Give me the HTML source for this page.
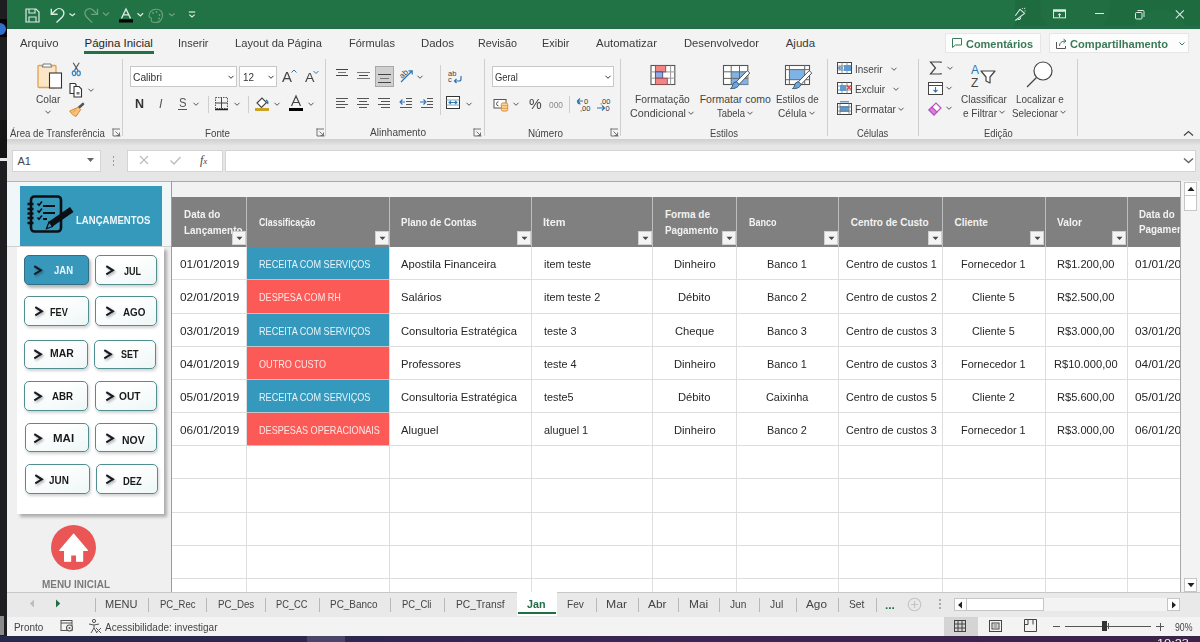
<!DOCTYPE html>
<html><head><meta charset="utf-8"><style>*{box-sizing:border-box;margin:0;padding:0}
html,body{width:1200px;height:642px;overflow:hidden;background:#f3f3f3;font-family:"Liberation Sans",sans-serif}
.a{position:absolute}
svg.a{overflow:visible}
.t{position:absolute;white-space:pre;line-height:1}
</style></head><body>
<div class="a" style="left:0px;top:0px;width:7px;height:642px;background:#1e1e20"></div>
<div class="a" style="left:0px;top:19px;width:7px;height:18px;background:#050505"></div>
<div class="a" style="left:-6px;top:23px;width:12px;height:12px;border-radius:50%;background:#2f6fd0"></div>
<div class="a" style="left:0px;top:120px;width:7px;height:38px;background:#141414"></div>
<div class="a" style="left:0px;top:158px;width:7px;height:3px;background:#e8e8e8"></div>
<div class="a" style="left:0px;top:616px;width:4px;height:19px;background:#8a8a8a"></div>
<div class="a" style="left:7px;top:0px;width:1193px;height:29px;background:#217346"></div>
<div class="a" style="left:1015px;top:0px;width:185px;height:29px;background:#1e6b40"></div>
<div class="a" style="left:1040px;top:-30px;width:70px;height:70px;border-radius:50%;background:#226f43;opacity:.6"></div>
<div class="a" style="left:1130px;top:10px;width:60px;height:60px;border-radius:50%;background:#207145;opacity:.6"></div>
<div class="a" style="left:7px;top:26px;width:1193px;height:3px;background:#246e47"></div>
<svg class="a" style="left:24px;top:7px" width="17" height="17" viewBox="0 0 17 17"><path d="M2 2h10l3 3v10H2z" fill="none" stroke="#dcebe2" stroke-width="1.2"/><path d="M5 2v4h6V2" fill="none" stroke="#dcebe2" stroke-width="1.1"/><path d="M5 15v-5h7v5" fill="none" stroke="#dcebe2" stroke-width="1.1"/></svg>
<svg class="a" style="left:45px;top:4px" width="60" height="24" viewBox="0 0 60 24"><path d="M6.3 4.8v5.5h6.3" fill="none" stroke="#dcebe2" stroke-width="1.4"/><path d="M6.6 10.1L10.8 6A4.7 4.7 0 0 1 17.5 12.7L11.5 18.6" fill="none" stroke="#dcebe2" stroke-width="1.4"/><path d="M24.5 9.5l2.8 2.2 2.8-2.2" fill="none" stroke="#dcebe2" stroke-width="1.3"/><path d="M52.5 4.8v5.5h-6.3" fill="none" stroke="#6fa283" stroke-width="1.3"/><path d="M52.2 10.1L48 6A4.7 4.7 0 0 0 41.3 12.7L47.3 18.6" fill="none" stroke="#6fa283" stroke-width="1.3"/></svg>
<svg class="a" style="left:102px;top:11px" width="8" height="6" viewBox="0 0 8 6"><path d="M1 1.5l3 3 3-3" fill="none" stroke="#6fa283" stroke-width="1.1"/></svg>
<svg class="a" style="left:110px;top:0px" width="90" height="30" viewBox="0 0 90 30"><path d="M11.5 18.4L16 8.9l4.5 9.5M13.2 14.8h5.6" fill="none" stroke="#dcebe2" stroke-width="1.3"/><rect x="9" y="19.3" width="14" height="3.2" fill="#000"/><path d="M27.5 13.3l2.8 2.6 2.8-2.6" fill="none" stroke="#dcebe2" stroke-width="1.3"/><path d="M46 9.2c-4.5 0-7.2 3.5-7 7 .1 1.5 1.5 1.2 2.2 1.8.8.7-.6 2.3.3 3.5.8 1 2.5 1 4.5 1 3.5 0 6.5-3 6.5-7s-2.5-6.3-6.5-6.3z" fill="none" stroke="#6fa283" stroke-width="1.1"/><circle cx="43" cy="13" r=".9" fill="#6fa283"/><circle cx="46.5" cy="12" r=".9" fill="#6fa283"/><circle cx="49.5" cy="15" r=".9" fill="#6fa283"/><circle cx="49" cy="18.5" r=".9" fill="#6fa283"/><path d="M59 13.5l2.8 2.2 2.8-2.2" fill="none" stroke="#6fa283" stroke-width="1.1"/><path d="M78.8 12h6.4" stroke="#dcebe2" stroke-width="1.2"/><path d="M79.3 14.6l2.7 2.3 2.7-2.3" fill="none" stroke="#dcebe2" stroke-width="1.2"/></svg>
<svg class="a" style="left:1008px;top:2px" width="26" height="24" viewBox="0 0 26 24"><path d="M7.3 13.8L12 7.3l4.6 4.1L7.3 18.5" fill="none" stroke="#dcebe2" stroke-width="1.1" stroke-linejoin="round"/><path d="M9.8 17.2a1.8 1.8 0 0 0 2.8-1.8" fill="none" stroke="#dcebe2" stroke-width="1.1"/><path d="M14.2 6l.5.9M17 5.8l-.6 1.2M17.6 8.8l-1 .3" stroke="#dcebe2" stroke-width="1"/></svg>
<svg class="a" style="left:1052px;top:8px" width="15" height="12" viewBox="0 0 15 12"><rect x="1.5" y="1.8" width="12" height="8" fill="none" stroke="#dcebe2" stroke-width="1"/><rect x="1.5" y="1.8" width="12" height="2" fill="#dcebe2"/><path d="M7.5 9V5.8M5.9 7.2l1.6-1.5 1.6 1.5" fill="none" stroke="#dcebe2" stroke-width="1"/></svg>
<div class="a" style="left:1095px;top:13px;width:9px;height:1px;background:#dcebe2"></div>
<svg class="a" style="left:1134px;top:9px" width="12" height="12" viewBox="0 0 12 12"><rect x="1.5" y="3.5" width="6.5" height="6.5" rx="1" fill="none" stroke="#dcebe2" stroke-width="1"/><path d="M3.5 1.5h5.5a1 1 0 0 1 1 1v5.5" fill="none" stroke="#dcebe2" stroke-width="1"/></svg>
<svg class="a" style="left:1174px;top:9px" width="11" height="11" viewBox="0 0 11 11"><path d="M1.8 1.3l8 8M9.8 1.3l-8 8" stroke="#dcebe2" stroke-width="1.1"/></svg>
<div class="a" style="left:7px;top:29px;width:1193px;height:28px;background:#f3f3f3"></div>
<div class="a" style="left:7px;top:29px;width:1193px;height:1px;background:#e4f3ea"></div>
<div class="t" style="left:19.50px;top:38.02px;font-size:11.5px;color:#3b3b3b;transform:scaleX(0.9876);transform-origin:0 0;">Arquivo</div>
<div class="t" style="left:84.50px;top:38.02px;font-size:11.5px;color:#262626;">Página Inicial</div>
<div class="t" style="left:177.50px;top:38.02px;font-size:11.5px;color:#3b3b3b;transform:scaleX(0.9540);transform-origin:0 0;">Inserir</div>
<div class="t" style="left:235.00px;top:38.02px;font-size:11.5px;color:#3b3b3b;transform:scaleX(0.9711);transform-origin:0 0;">Layout da Página</div>
<div class="t" style="left:349.00px;top:38.02px;font-size:11.5px;color:#3b3b3b;transform:scaleX(0.9592);transform-origin:0 0;">Fórmulas</div>
<div class="t" style="left:421.00px;top:38.02px;font-size:11.5px;color:#3b3b3b;transform:scaleX(0.9929);transform-origin:0 0;">Dados</div>
<div class="t" style="left:477.70px;top:38.02px;font-size:11.5px;color:#3b3b3b;transform:scaleX(0.9381);transform-origin:0 0;">Revisão</div>
<div class="t" style="left:541.70px;top:38.02px;font-size:11.5px;color:#3b3b3b;transform:scaleX(0.9496);transform-origin:0 0;">Exibir</div>
<div class="t" style="left:595.70px;top:38.02px;font-size:11.5px;color:#3b3b3b;transform:scaleX(0.9943);transform-origin:0 0;">Automatizar</div>
<div class="t" style="left:684.00px;top:38.02px;font-size:11.5px;color:#3b3b3b;transform:scaleX(0.9778);transform-origin:0 0;">Desenvolvedor</div>
<div class="t" style="left:785.70px;top:38.02px;font-size:11.5px;color:#3b3b3b;">Ajuda</div>
<div class="a" style="left:84px;top:51px;width:70px;height:3px;background:#217346"></div>
<div class="a" style="left:945px;top:33px;width:96px;height:20px;background:#fdfdfd;border:1px solid #e6e6e6"></div>
<svg class="a" style="left:951px;top:37px" width="12" height="12" viewBox="0 0 12 12"><path d="M1.5 1.5h9v6.5h-6l-3 2.5z" fill="none" stroke="#3b7a57" stroke-width="1"/></svg>
<div class="t" style="left:966.00px;top:38.52px;font-size:11.5px;color:#3b7a57;font-weight:bold;transform:scaleX(0.9535);transform-origin:0 0;">Comentários</div>
<div class="a" style="left:1049px;top:33px;width:140px;height:20px;background:#fdfdfd;border:1px solid #e6e6e6"></div>
<svg class="a" style="left:1055px;top:37px" width="13" height="13" viewBox="0 0 13 13"><path d="M1.5 5v6.5h9V9" fill="none" stroke="#555" stroke-width="1"/><path d="M4.5 9c0-3 2-5 6-5M8.5 2l2.5 2-2.5 2" fill="none" stroke="#3b7a57" stroke-width="1"/></svg>
<div class="t" style="left:1070.00px;top:38.52px;font-size:11.5px;color:#3b7a57;font-weight:bold;transform:scaleX(0.9645);transform-origin:0 0;">Compartilhamento</div>
<svg class="a" style="left:1178px;top:41px" width="8" height="6" viewBox="0 0 8 6"><path d="M1.5 1.5l2.5 2.5 2.5-2.5" fill="none" stroke="#3b7a57" stroke-width="1"/></svg>
<div class="a" style="left:7px;top:57px;width:1193px;height:82px;background:#f3f3f3"></div>
<div class="a" style="left:7px;top:139px;width:1193px;height:6px;background:linear-gradient(#cfcfcf,#e3e3e3)"></div>
<div class="a" style="left:7px;top:145px;width:1193px;height:36px;background:#e6e6e6"></div>
<svg class="a" style="left:36px;top:62px" width="28" height="28" viewBox="0 0 28 28"><rect x="2" y="3.5" width="18" height="22" rx="1" fill="#fbe7c8" stroke="#e0a050" stroke-width="1.3"/><path d="M7 3.5V2h8v1.5l1 1.5H6z" fill="#fff" stroke="#777" stroke-width="1"/><rect x="13.5" y="11" width="12" height="15" fill="#fff" stroke="#333" stroke-width="1.1"/></svg>
<div class="t" style="left:36.00px;top:93.77px;font-size:11px;color:#444;transform:scaleX(0.9243);transform-origin:0 0;">Colar</div>
<svg class="a" style="left:44px;top:109px" width="8" height="6" viewBox="0 0 8 6"><path d="M1.5 1.8l2.5 2.5 2.5-2.5" fill="none" stroke="#555" stroke-width="1"/></svg>
<svg class="a" style="left:70px;top:62px" width="13" height="15" viewBox="0 0 13 15"><path d="M3.2 .8l4.8 7.8M9.2 .8L4.4 8.6" stroke="#555" stroke-width="1.1" fill="none"/><ellipse cx="4" cy="11.3" rx="1.7" ry="2.3" fill="none" stroke="#3a8ac8" stroke-width="1.3"/><ellipse cx="8.6" cy="11.3" rx="1.7" ry="2.3" fill="none" stroke="#3a8ac8" stroke-width="1.3"/></svg>
<svg class="a" style="left:68px;top:82px" width="16" height="16" viewBox="0 0 16 16"><path d="M2 1.5h5l1 1v9H2z" fill="#fff" stroke="#333" stroke-width="1.1"/><path d="M6 4.5h5l2.5 2.5v8H6z" fill="#fff" stroke="#333" stroke-width="1.1"/><rect x="8.5" y="10" width="3" height="2.5" fill="#777"/></svg>
<svg class="a" style="left:87px;top:87px" width="8" height="6" viewBox="0 0 8 6"><path d="M1.5 1.8l2.5 2.5 2.5-2.5" fill="none" stroke="#555" stroke-width="1"/></svg>
<svg class="a" style="left:68px;top:102px" width="17" height="16" viewBox="0 0 17 16"><path d="M15 2l-4.5 4" stroke="#555" stroke-width="2.6" stroke-linecap="round"/><path d="M10.3 5.2l2.4 2.4-4.6 6.8c-2.3-.6-4.8-2.6-6.4-5.4z" fill="#f7c27e" stroke="#d9892b" stroke-width="1"/><path d="M5 10.5l3-3" stroke="#d9892b" stroke-width=".8"/></svg>
<div class="t" style="left:10.00px;top:128.58px;font-size:10px;color:#444;transform:scaleX(0.9650);transform-origin:0 0;">Área de Transferência</div>
<svg class="a" style="left:112px;top:128px" width="9" height="9" viewBox="0 0 9 9"><path d="M1 .5v7.5h7.5M.5 1h7.5" fill="none" stroke="#666" stroke-width=".9"/><path d="M3.5 3.5l4 4M4.5 7.5h3v-3" fill="none" stroke="#666" stroke-width=".9"/></svg>
<div class="a" style="left:122px;top:59px;width:1px;height:77px;background:#cfcfcf"></div>
<div class="a" style="left:130px;top:66px;width:107px;height:21px;background:#fff;border:1px solid #c8c8c8"></div>
<div class="t" style="left:133.00px;top:71.77px;font-size:11px;color:#333;transform:scaleX(0.9299);transform-origin:0 0;">Calibri</div>
<svg class="a" style="left:227px;top:74px" width="8" height="6" viewBox="0 0 8 6"><path d="M1.5 1.8l2.5 2.5 2.5-2.5" fill="none" stroke="#333" stroke-width="1"/></svg>
<div class="a" style="left:239px;top:66px;width:38px;height:21px;background:#fff;border:1px solid #c8c8c8"></div>
<div class="t" style="left:243.00px;top:71.77px;font-size:11px;color:#333;transform:scaleX(0.9009);transform-origin:0 0;">12</div>
<svg class="a" style="left:267px;top:74px" width="8" height="6" viewBox="0 0 8 6"><path d="M1.5 1.8l2.5 2.5 2.5-2.5" fill="none" stroke="#333" stroke-width="1"/></svg>
<div class="t" style="left:282.00px;top:70.27px;font-size:14px;color:#444;transform:scaleX(1.0661);transform-origin:0 0;">A</div>
<svg class="a" style="left:291px;top:69px" width="6" height="5" viewBox="0 0 6 5"><path d="M.5 3.5l2.5-2.5 2.5 2.5" fill="none" stroke="#2e75b6" stroke-width="1"/></svg>
<div class="t" style="left:304.50px;top:72.27px;font-size:12px;color:#444;transform:scaleX(1.1816);transform-origin:0 0;">A</div>
<svg class="a" style="left:313px;top:70px" width="6" height="5" viewBox="0 0 6 5"><path d="M.5 1l2.5 2.5 2.5-2.5" fill="none" stroke="#2e75b6" stroke-width="1"/></svg>
<div class="t" style="left:134.50px;top:97.77px;font-size:12px;color:#333;font-weight:bold;transform:scaleX(1.0417);transform-origin:0 0;">N</div>
<div class="t" style="left:159.00px;top:97.77px;font-size:12px;color:#555;transform:scaleX(1.0417);transform-origin:0 0;font-style:italic;">I</div>
<div class="t" style="left:178.50px;top:97.27px;font-size:12px;color:#555;transform:scaleX(0.9398);transform-origin:0 0;">S</div>
<div class="a" style="left:178px;top:109px;width:9px;height:1px;background:#555"></div>
<svg class="a" style="left:192px;top:101px" width="8" height="6" viewBox="0 0 8 6"><path d="M1.5 1.8l2.5 2.5 2.5-2.5" fill="none" stroke="#555" stroke-width="1"/></svg>
<div class="a" style="left:208px;top:96px;width:1px;height:17px;background:#cfcfcf"></div>
<svg class="a" style="left:214px;top:96px" width="16" height="16" viewBox="0 0 16 16"><rect x="1.5" y="1.5" width="12" height="11" fill="none" stroke="#555" stroke-width="1" stroke-dasharray="1.5 1"/><path d="M7.5 1.5v11M1.5 7h12" stroke="#444" stroke-width="1"/><path d="M1 13.5h13" stroke="#222" stroke-width="1.5"/></svg>
<svg class="a" style="left:233px;top:101px" width="8" height="6" viewBox="0 0 8 6"><path d="M1.5 1.8l2.5 2.5 2.5-2.5" fill="none" stroke="#555" stroke-width="1"/></svg>
<div class="a" style="left:248px;top:96px;width:1px;height:17px;background:#cfcfcf"></div>
<svg class="a" style="left:254px;top:95px" width="17" height="17" viewBox="0 0 17 17"><path d="M3 8l5-5 4.5 4.5-5 5z" fill="#fff" stroke="#444" stroke-width="1.1"/><path d="M12 5c1.5 1 2 3 1.5 4" fill="none" stroke="#2e75b6" stroke-width="1.3"/><rect x="1" y="13" width="14" height="3" fill="#c9a227"/></svg>
<svg class="a" style="left:273px;top:101px" width="8" height="6" viewBox="0 0 8 6"><path d="M1.5 1.8l2.5 2.5 2.5-2.5" fill="none" stroke="#555" stroke-width="1"/></svg>
<svg class="a" style="left:288px;top:95px" width="16" height="17" viewBox="0 0 16 17"><path d="M3.5 11l4.5-10 4.5 10M5.5 7.5h5" fill="none" stroke="#444" stroke-width="1.2"/><rect x="1" y="13" width="14" height="3" fill="#000"/></svg>
<svg class="a" style="left:307px;top:101px" width="8" height="6" viewBox="0 0 8 6"><path d="M1.5 1.8l2.5 2.5 2.5-2.5" fill="none" stroke="#555" stroke-width="1"/></svg>
<div class="t" style="left:205.00px;top:128.78px;font-size:10px;color:#444;transform:scaleX(0.9785);transform-origin:0 0;">Fonte</div>
<svg class="a" style="left:316px;top:128px" width="9" height="9" viewBox="0 0 9 9"><path d="M1 .5v7.5h7.5M.5 1h7.5" fill="none" stroke="#666" stroke-width=".9"/><path d="M3.5 3.5l4 4M4.5 7.5h3v-3" fill="none" stroke="#666" stroke-width=".9"/></svg>
<div class="a" style="left:325px;top:59px;width:1px;height:77px;background:#cfcfcf"></div>
<div class="a" style="left:336px;top:69px;width:12px;height:1px;background:#444"></div>
<div class="a" style="left:338px;top:72px;width:8px;height:1px;background:#777"></div>
<div class="a" style="left:336px;top:75px;width:12px;height:1px;background:#444"></div>
<div class="a" style="left:357px;top:72px;width:13px;height:1px;background:#777"></div>
<div class="a" style="left:359px;top:75px;width:9px;height:1px;background:#444"></div>
<div class="a" style="left:357px;top:78px;width:13px;height:1px;background:#777"></div>
<div class="a" style="left:375px;top:66px;width:19px;height:21px;background:#d0d0d0;border:1px solid #a8a8a8"></div>
<div class="a" style="left:378px;top:74px;width:13px;height:1px;background:#444"></div>
<div class="a" style="left:380px;top:78px;width:9px;height:1px;background:#777"></div>
<div class="a" style="left:378px;top:82px;width:13px;height:1px;background:#444"></div>
<svg class="a" style="left:398px;top:67px" width="17" height="17" viewBox="0 0 17 17"><text x="1" y="10" font-size="8" fill="#444" font-family="Liberation Sans" transform="rotate(-45 5 7)">ab</text><path d="M3 15L14 4M10.5 3.8H14.2V7.5" fill="none" stroke="#2e75b6" stroke-width="1.2"/></svg>
<svg class="a" style="left:416px;top:74px" width="8" height="6" viewBox="0 0 8 6"><path d="M1.5 1.8l2.5 2.5 2.5-2.5" fill="none" stroke="#555" stroke-width="1"/></svg>
<div class="a" style="left:336px;top:98px;width:12px;height:1px;background:#555"></div>
<div class="a" style="left:336px;top:101px;width:9px;height:1px;background:#555"></div>
<div class="a" style="left:336px;top:104px;width:12px;height:1px;background:#555"></div>
<div class="a" style="left:336px;top:107px;width:9px;height:1px;background:#555"></div>
<div class="a" style="left:357px;top:98px;width:12px;height:1px;background:#555"></div>
<div class="a" style="left:359px;top:101px;width:8px;height:1px;background:#555"></div>
<div class="a" style="left:357px;top:104px;width:12px;height:1px;background:#555"></div>
<div class="a" style="left:359px;top:107px;width:8px;height:1px;background:#555"></div>
<div class="a" style="left:378px;top:98px;width:12px;height:1px;background:#555"></div>
<div class="a" style="left:381px;top:101px;width:9px;height:1px;background:#555"></div>
<div class="a" style="left:378px;top:104px;width:12px;height:1px;background:#555"></div>
<div class="a" style="left:381px;top:107px;width:9px;height:1px;background:#555"></div>
<div class="a" style="left:406px;top:98px;width:6px;height:1px;background:#555"></div>
<div class="a" style="left:406px;top:101px;width:6px;height:1px;background:#555"></div>
<div class="a" style="left:406px;top:104px;width:6px;height:1px;background:#555"></div>
<div class="a" style="left:400px;top:107px;width:12px;height:1px;background:#555"></div>
<svg class="a" style="left:399px;top:99px" width="7" height="6" viewBox="0 0 7 6"><path d="M6 3H1M3.5 .5L1 3l2.5 2.5" fill="none" stroke="#2e75b6" stroke-width="1.1"/></svg>
<div class="a" style="left:427px;top:98px;width:6px;height:1px;background:#555"></div>
<div class="a" style="left:427px;top:101px;width:6px;height:1px;background:#555"></div>
<div class="a" style="left:427px;top:104px;width:6px;height:1px;background:#555"></div>
<div class="a" style="left:421px;top:107px;width:12px;height:1px;background:#555"></div>
<svg class="a" style="left:420px;top:99px" width="7" height="6" viewBox="0 0 7 6"><path d="M0 3h5M3.5 .5L6 3 3.5 5.5" fill="none" stroke="#2e75b6" stroke-width="1.1"/></svg>
<div class="a" style="left:440px;top:65px;width:1px;height:50px;background:#cfcfcf"></div>
<svg class="a" style="left:448px;top:69px" width="15" height="15" viewBox="0 0 15 15"><text x="0" y="6.5" font-size="7.5" fill="#444" font-family="Liberation Sans">ab</text><text x="0" y="13" font-size="7.5" fill="#444" font-family="Liberation Sans">c</text><path d="M13 7v3a2 2 0 0 1-2 2H6.5M8.5 10l-2 2 2 2" fill="none" stroke="#2e75b6" stroke-width="1.2"/></svg>
<svg class="a" style="left:446px;top:96px" width="15" height="14" viewBox="0 0 15 14"><rect x=".5" y=".5" width="13" height="12" fill="#fff" stroke="#333" stroke-width="1"/><path d="M.5 4h13M.5 9h13" stroke="#7ab" stroke-width="1"/><path d="M3 6.5h8M5 4.8L3 6.5 5 8.2M9 4.8l2 1.7-2 1.7" fill="none" stroke="#2e75b6" stroke-width="1.1"/></svg>
<svg class="a" style="left:465px;top:101px" width="8" height="6" viewBox="0 0 8 6"><path d="M1.5 1.8l2.5 2.5 2.5-2.5" fill="none" stroke="#555" stroke-width="1"/></svg>
<div class="t" style="left:370.00px;top:128.38px;font-size:10px;color:#444;transform:scaleX(1.0072);transform-origin:0 0;">Alinhamento</div>
<svg class="a" style="left:473px;top:128px" width="9" height="9" viewBox="0 0 9 9"><path d="M1 .5v7.5h7.5M.5 1h7.5" fill="none" stroke="#666" stroke-width=".9"/><path d="M3.5 3.5l4 4M4.5 7.5h3v-3" fill="none" stroke="#666" stroke-width=".9"/></svg>
<div class="a" style="left:484px;top:59px;width:1px;height:77px;background:#cfcfcf"></div>
<div class="a" style="left:492px;top:66px;width:122px;height:21px;background:#fff;border:1px solid #c8c8c8"></div>
<div class="t" style="left:494.70px;top:71.77px;font-size:11px;color:#333;transform:scaleX(0.8515);transform-origin:0 0;">Geral</div>
<svg class="a" style="left:604px;top:74px" width="8" height="6" viewBox="0 0 8 6"><path d="M1.5 1.8l2.5 2.5 2.5-2.5" fill="none" stroke="#333" stroke-width="1"/></svg>
<svg class="a" style="left:493px;top:98px" width="17" height="14" viewBox="0 0 17 14"><rect x="1" y="1.5" width="12" height="8.5" fill="#fff" stroke="#555" stroke-width="1"/><path d="M5.5 3.8a2 2 0 1 0 0 4" fill="none" stroke="#555" stroke-width="1"/><rect x="8.3" y="5" width="6.4" height="8" rx="1.5" fill="#fbd7a0" stroke="#e08a2a" stroke-width="1"/><path d="M8.3 7.7h6.4M8.3 10.3h6.4" stroke="#e08a2a" stroke-width=".8"/></svg>
<svg class="a" style="left:512px;top:101px" width="8" height="6" viewBox="0 0 8 6"><path d="M1.5 1.8l2.5 2.5 2.5-2.5" fill="none" stroke="#555" stroke-width="1"/></svg>
<div class="t" style="left:529.00px;top:97.21px;font-size:14.5px;color:#444;transform:scaleX(0.9841);transform-origin:0 0;">%</div>
<div class="t" style="left:549.00px;top:99.83px;font-size:9.5px;color:#888;transform:scaleX(0.8824);transform-origin:0 0;">000</div>
<div class="a" style="left:569px;top:96px;width:1px;height:17px;background:#cfcfcf"></div>
<svg class="a" style="left:575px;top:97px" width="17" height="15" viewBox="0 0 17 15"><path d="M8 4H3M5 1.5L2.5 4 5 6.5" fill="none" stroke="#2e75b6" stroke-width="1.2"/><path d="M2.5 4c0 2 1.5 3 3 3" fill="none" stroke="#2e75b6" stroke-width="1.1"/><text x="9" y="7" font-size="7.5" fill="#333" font-family="Liberation Sans">0</text><text x="5" y="14" font-size="7.5" fill="#333" font-family="Liberation Sans">,00</text></svg>
<svg class="a" style="left:596px;top:97px" width="17" height="15" viewBox="0 0 17 15"><text x="4" y="7" font-size="7.5" fill="#333" font-family="Liberation Sans">,00</text><path d="M1 11h7M6 8.5l2.5 2.5L6 13.5" fill="none" stroke="#2e75b6" stroke-width="1.2"/><text x="9.5" y="14" font-size="7.5" fill="#333" font-family="Liberation Sans">0</text></svg>
<div class="t" style="left:528.00px;top:128.58px;font-size:10px;color:#444;transform:scaleX(0.9845);transform-origin:0 0;">Número</div>
<svg class="a" style="left:610px;top:128px" width="9" height="9" viewBox="0 0 9 9"><path d="M1 .5v7.5h7.5M.5 1h7.5" fill="none" stroke="#666" stroke-width=".9"/><path d="M3.5 3.5l4 4M4.5 7.5h3v-3" fill="none" stroke="#666" stroke-width=".9"/></svg>
<div class="a" style="left:620px;top:59px;width:1px;height:77px;background:#cfcfcf"></div>
<svg class="a" style="left:650px;top:65px" width="25" height="20" viewBox="0 0 25 20"><rect x="1" y=".5" width="23.8" height="19" fill="#fff" stroke="#555" stroke-width="1.1"/><path d="M1 6.9h23.8M1 13.2h23.8M20.6 .5v19" stroke="#999" stroke-width="1"/><rect x="5.4" y=".5" width="10.3" height="6.4" fill="#f08585" stroke="#9a4545" stroke-width=".9"/><rect x="5.4" y="6.9" width="7.3" height="6.3" fill="#93a9e3" stroke="#3a4f80" stroke-width=".9"/><rect x="5.4" y="13.2" width="11.9" height="6.3" fill="#f08585" stroke="#9a4545" stroke-width=".9"/></svg>
<svg class="a" style="left:720px;top:62px" width="34" height="30" viewBox="0 0 34 30"><rect x="3.5" y="3.5" width="24.3" height="19" fill="#fff" stroke="#555" stroke-width="1.1"/><rect x="11.2" y="9.8" width="16.6" height="12.7" fill="#7fb2e5"/><path d="M11.2 3.5v19M19.5 3.5v19M3.5 9.8h24.3M3.5 16.4h24.3" stroke="#666" stroke-width="1"/><path d="M27.2 8.6l2.6 2.4-10.8 11.6-2.8-2.6z" fill="#fff" stroke="#555" stroke-width="1"/><path d="M16.3 19.6l2.8 2.8c-.8 2.6-3.5 4.4-8.6 4.2 2.2-1.6 2-3.6 3-5.6z" fill="#6aa8e0" stroke="#3a4a5a" stroke-width=".9"/></svg>
<svg class="a" style="left:782px;top:62px" width="34" height="30" viewBox="0 0 34 30"><rect x="3.5" y="3.5" width="24" height="19" fill="#fff" stroke="#555" stroke-width="1.1"/><rect x="7.4" y="7.6" width="15.3" height="10.1" fill="#7fb2e5"/><path d="M7.4 3.5v19M22.7 3.5v19M3.5 7.6h24M3.5 17.7h24" stroke="#666" stroke-width="1"/><path d="M27.2 8.6l2.6 2.4-10.8 11.6-2.8-2.6z" fill="#fff" stroke="#555" stroke-width="1"/><path d="M16.3 19.6l2.8 2.8c-.8 2.6-3.5 4.4-8.6 4.2 2.2-1.6 2-3.6 3-5.6z" fill="#6aa8e0" stroke="#3a4a5a" stroke-width=".9"/></svg>
<div class="t" style="left:635.00px;top:94.12px;font-size:10.5px;color:#444;transform:scaleX(0.9783);transform-origin:0 0;">Formatação</div>
<div class="t" style="left:630.00px;top:108.32px;font-size:10.5px;color:#444;transform:scaleX(1.0207);transform-origin:0 0;">Condicional</div>
<svg class="a" style="left:687px;top:110px" width="8" height="6" viewBox="0 0 8 6"><path d="M1.5 1.8l2.5 2.5 2.5-2.5" fill="none" stroke="#555" stroke-width="1"/></svg>
<div class="t" style="left:699.70px;top:94.12px;font-size:10.5px;color:#444;">Formatar como</div>
<div class="t" style="left:717.00px;top:108.32px;font-size:10.5px;color:#444;transform:scaleX(0.9040);transform-origin:0 0;">Tabela</div>
<svg class="a" style="left:746px;top:110px" width="8" height="6" viewBox="0 0 8 6"><path d="M1.5 1.8l2.5 2.5 2.5-2.5" fill="none" stroke="#555" stroke-width="1"/></svg>
<div class="t" style="left:775.80px;top:94.12px;font-size:10.5px;color:#444;transform:scaleX(0.9403);transform-origin:0 0;">Estilos de</div>
<div class="t" style="left:778.30px;top:108.32px;font-size:10.5px;color:#444;transform:scaleX(0.9624);transform-origin:0 0;">Célula</div>
<svg class="a" style="left:808px;top:110px" width="8" height="6" viewBox="0 0 8 6"><path d="M1.5 1.8l2.5 2.5 2.5-2.5" fill="none" stroke="#555" stroke-width="1"/></svg>
<div class="t" style="left:710.40px;top:128.78px;font-size:10px;color:#444;transform:scaleX(0.9474);transform-origin:0 0;">Estilos</div>
<div class="a" style="left:827px;top:59px;width:1px;height:77px;background:#cfcfcf"></div>
<svg class="a" style="left:837px;top:62px" width="15" height="12" viewBox="0 0 15 12"><rect x=".5" y=".5" width="14" height="11" fill="#fff" stroke="#444" stroke-width="1"/><path d="M.5 4h14M.5 8h14M5 .5v11M10 .5v11" stroke="#777" stroke-width=".8"/><rect x="7" y="3" width="7" height="6" fill="#5b9bd5"/><path d="M6 6H1.5M3.5 4L1.5 6l2 2" fill="none" stroke="#2e75b6" stroke-width="1"/></svg>
<div class="t" style="left:854.60px;top:64.17px;font-size:11px;color:#444;transform:scaleX(0.9026);transform-origin:0 0;">Inserir</div>
<svg class="a" style="left:890px;top:66px" width="8" height="6" viewBox="0 0 8 6"><path d="M1.5 1.8l2.5 2.5 2.5-2.5" fill="none" stroke="#555" stroke-width="1"/></svg>
<svg class="a" style="left:837px;top:82px" width="15" height="12" viewBox="0 0 15 12"><rect x=".5" y=".5" width="14" height="11" fill="#fff" stroke="#444" stroke-width="1"/><path d="M.5 4h14M.5 8h14M5 .5v11M10 .5v11" stroke="#777" stroke-width=".8"/><rect x="3" y="3" width="6" height="6" fill="#5b9bd5"/><path d="M10 3.5l4 4M14 3.5l-4 4" stroke="#e04040" stroke-width="1.1"/></svg>
<div class="t" style="left:854.60px;top:83.77px;font-size:11px;color:#444;transform:scaleX(0.9152);transform-origin:0 0;">Excluir</div>
<svg class="a" style="left:892px;top:86px" width="8" height="6" viewBox="0 0 8 6"><path d="M1.5 1.8l2.5 2.5 2.5-2.5" fill="none" stroke="#555" stroke-width="1"/></svg>
<svg class="a" style="left:837px;top:101px" width="15" height="14" viewBox="0 0 15 14"><rect x=".5" y="2.5" width="14" height="11" fill="#fff" stroke="#444" stroke-width="1"/><rect x="3" y="5" width="9" height="6" fill="#5b9bd5"/><path d="M.5 6h14M.5 10h14M3 2.5v11M12 2.5v11" stroke="#777" stroke-width=".8"/><path d="M3 .8h9" stroke="#2e75b6" stroke-width="1"/></svg>
<div class="t" style="left:854.60px;top:104.27px;font-size:11px;color:#444;transform:scaleX(0.9169);transform-origin:0 0;">Formatar</div>
<svg class="a" style="left:897px;top:106px" width="8" height="6" viewBox="0 0 8 6"><path d="M1.5 1.8l2.5 2.5 2.5-2.5" fill="none" stroke="#555" stroke-width="1"/></svg>
<div class="t" style="left:857.40px;top:128.78px;font-size:10px;color:#444;transform:scaleX(0.9385);transform-origin:0 0;">Células</div>
<div class="a" style="left:918px;top:59px;width:1px;height:77px;background:#cfcfcf"></div>
<svg class="a" style="left:929px;top:61px" width="13" height="14" viewBox="0 0 13 14"><path d="M12 2V1H1.5l5 6-5 6H12v-1" fill="none" stroke="#444" stroke-width="1.2"/></svg>
<svg class="a" style="left:946px;top:65px" width="8" height="6" viewBox="0 0 8 6"><path d="M1.5 1.8l2.5 2.5 2.5-2.5" fill="none" stroke="#555" stroke-width="1"/></svg>
<svg class="a" style="left:928px;top:82px" width="15" height="13" viewBox="0 0 15 13"><rect x=".5" y=".5" width="14" height="12" fill="#fff" stroke="#444" stroke-width="1"/><path d="M.5 3.5h14" stroke="#444" stroke-width="1"/><path d="M7.5 5v5M5.5 8l2 2 2-2" fill="none" stroke="#2e75b6" stroke-width="1.1"/></svg>
<svg class="a" style="left:945px;top:85px" width="8" height="6" viewBox="0 0 8 6"><path d="M1.5 1.8l2.5 2.5 2.5-2.5" fill="none" stroke="#555" stroke-width="1"/></svg>
<svg class="a" style="left:927px;top:100px" width="16" height="16" viewBox="0 0 16 16"><path d="M2 10l7-7 5 5-7 7z" fill="#fff" stroke="#b94fc0" stroke-width="1.2"/><path d="M2 10l3-3 5 5-3 3z" fill="#d880dc" stroke="#b94fc0" stroke-width="1.1"/></svg>
<svg class="a" style="left:945px;top:105px" width="8" height="6" viewBox="0 0 8 6"><path d="M1.5 1.8l2.5 2.5 2.5-2.5" fill="none" stroke="#555" stroke-width="1"/></svg>
<svg class="a" style="left:970px;top:63px" width="28" height="25" viewBox="0 0 28 25"><text x="1" y="11" font-size="12" fill="#2e75b6" font-family="Liberation Sans">A</text><text x="1" y="24" font-size="12" fill="#444" font-family="Liberation Sans">Z</text><path d="M11 8h14l-5 6v6l-4-2v-4z" fill="#fff" stroke="#444" stroke-width="1.2" stroke-linejoin="round"/></svg>
<div class="t" style="left:960.80px;top:94.27px;font-size:10.5px;color:#444;transform:scaleX(0.9482);transform-origin:0 0;">Classificar</div>
<div class="t" style="left:963.00px;top:107.82px;font-size:10.5px;color:#444;transform:scaleX(0.9552);transform-origin:0 0;">e Filtrar</div>
<svg class="a" style="left:998px;top:109px" width="8" height="6" viewBox="0 0 8 6"><path d="M1.5 1.8l2.5 2.5 2.5-2.5" fill="none" stroke="#555" stroke-width="1"/></svg>
<svg class="a" style="left:1025px;top:61px" width="30" height="28" viewBox="0 0 30 28"><circle cx="18" cy="10" r="9" fill="#fff" stroke="#444" stroke-width="1.2"/><path d="M11.5 16.5L2 26" stroke="#444" stroke-width="1.3"/></svg>
<div class="t" style="left:1016.25px;top:94.27px;font-size:10.5px;color:#444;transform:scaleX(0.9406);transform-origin:0 0;">Localizar e</div>
<div class="t" style="left:1011.90px;top:107.82px;font-size:10.5px;color:#444;transform:scaleX(0.9292);transform-origin:0 0;">Selecionar</div>
<svg class="a" style="left:1059px;top:109px" width="8" height="6" viewBox="0 0 8 6"><path d="M1.5 1.8l2.5 2.5 2.5-2.5" fill="none" stroke="#555" stroke-width="1"/></svg>
<div class="t" style="left:983.75px;top:128.78px;font-size:10px;color:#444;transform:scaleX(0.9395);transform-origin:0 0;">Edição</div>
<div class="a" style="left:1077px;top:59px;width:1px;height:77px;background:#cfcfcf"></div>
<svg class="a" style="left:1183px;top:130px" width="11" height="7" viewBox="0 0 11 7"><path d="M1 5.5l4.5-4 4.5 4" fill="none" stroke="#444" stroke-width="1.2"/></svg>
<div class="a" style="left:12px;top:150px;width:89px;height:22px;background:#fff;border:1px solid #d4d4d4"></div>
<div class="t" style="left:17.50px;top:156.27px;font-size:11px;color:#444;">A1</div>
<svg class="a" style="left:86px;top:157px" width="9" height="6" viewBox="0 0 9 6"><path d="M1 1h7L4.5 5z" fill="#666"/></svg>
<div class="a" style="left:113px;top:156px;width:1px;height:2px;background:#999"></div>
<div class="a" style="left:113px;top:160px;width:1px;height:2px;background:#999"></div>
<div class="a" style="left:113px;top:164px;width:1px;height:2px;background:#999"></div>
<div class="a" style="left:127px;top:150px;width:96px;height:22px;background:#fff;border:1px solid #d4d4d4"></div>
<svg class="a" style="left:138px;top:154px" width="12" height="12" viewBox="0 0 12 12"><path d="M2 2l8 8M10 2l-8 8" stroke="#bbb" stroke-width="1.1"/></svg>
<svg class="a" style="left:169px;top:154px" width="13" height="12" viewBox="0 0 13 12"><path d="M1.5 6.5l3.5 3.5 6.5-7" fill="none" stroke="#bbb" stroke-width="1.3"/></svg>
<div class="t" style="left:200px;top:154px;font-size:12px;font-family:'Liberation Serif';font-style:italic;color:#444">f<span style="font-size:9px">x</span></div>
<div class="a" style="left:225px;top:150px;width:971px;height:22px;background:#fff;border:1px solid #d4d4d4"></div>
<svg class="a" style="left:1183px;top:157px" width="11" height="7" viewBox="0 0 11 7"><path d="M1 1.5l4.5 4 4.5-4" fill="none" stroke="#666" stroke-width="1.5"/></svg>
<div class="a" style="left:7px;top:181px;width:164px;height:411px;background:#f0f0f0"></div>
<div class="a" style="left:7px;top:181px;width:164px;height:1px;background:#b4b4b4"></div>
<div class="a" style="left:7px;top:182px;width:164px;height:64px;background:#f1f6f8"></div>
<div class="a" style="left:7px;top:246px;width:164px;height:1px;background:#d0d0d0"></div>
<div class="a" style="left:0;top:0;width:1180px;height:592px;overflow:hidden">
<div class="a" style="left:171px;top:181px;width:1009px;height:411px;background:#fff"></div>
<div class="a" style="left:171px;top:181px;width:1009px;height:1px;background:#a8a8a8"></div>
<div class="a" style="left:172px;top:182px;width:1008px;height:15px;background:#f2f2f2"></div>
<div class="a" style="left:172px;top:197px;width:1008px;height:50px;background:#808080"></div>
<div class="a" style="left:172px;top:279px;width:1008px;height:1px;background:#dedede"></div>
<div class="a" style="left:172px;top:313px;width:1008px;height:1px;background:#dedede"></div>
<div class="a" style="left:172px;top:346px;width:1008px;height:1px;background:#dedede"></div>
<div class="a" style="left:172px;top:379px;width:1008px;height:1px;background:#dedede"></div>
<div class="a" style="left:172px;top:412px;width:1008px;height:1px;background:#dedede"></div>
<div class="a" style="left:172px;top:445px;width:1008px;height:1px;background:#dedede"></div>
<div class="a" style="left:172px;top:478px;width:1008px;height:1px;background:#dedede"></div>
<div class="a" style="left:172px;top:512px;width:1008px;height:1px;background:#dedede"></div>
<div class="a" style="left:172px;top:545px;width:1008px;height:1px;background:#dedede"></div>
<div class="a" style="left:172px;top:578px;width:1008px;height:1px;background:#dedede"></div>
<div class="a" style="left:172px;top:611px;width:1008px;height:1px;background:#dedede"></div>
<div class="a" style="left:246px;top:197px;width:1px;height:50px;background:#bdbdbd"></div>
<div class="a" style="left:246px;top:247px;width:1px;height:345px;background:#dedede"></div>
<div class="a" style="left:389px;top:197px;width:1px;height:50px;background:#bdbdbd"></div>
<div class="a" style="left:389px;top:247px;width:1px;height:345px;background:#dedede"></div>
<div class="a" style="left:531px;top:197px;width:1px;height:50px;background:#bdbdbd"></div>
<div class="a" style="left:531px;top:247px;width:1px;height:345px;background:#dedede"></div>
<div class="a" style="left:652px;top:197px;width:1px;height:50px;background:#bdbdbd"></div>
<div class="a" style="left:652px;top:247px;width:1px;height:345px;background:#dedede"></div>
<div class="a" style="left:736px;top:197px;width:1px;height:50px;background:#bdbdbd"></div>
<div class="a" style="left:736px;top:247px;width:1px;height:345px;background:#dedede"></div>
<div class="a" style="left:838px;top:197px;width:1px;height:50px;background:#bdbdbd"></div>
<div class="a" style="left:838px;top:247px;width:1px;height:345px;background:#dedede"></div>
<div class="a" style="left:942px;top:197px;width:1px;height:50px;background:#bdbdbd"></div>
<div class="a" style="left:942px;top:247px;width:1px;height:345px;background:#dedede"></div>
<div class="a" style="left:1045px;top:197px;width:1px;height:50px;background:#bdbdbd"></div>
<div class="a" style="left:1045px;top:247px;width:1px;height:345px;background:#dedede"></div>
<div class="a" style="left:1127px;top:197px;width:1px;height:50px;background:#bdbdbd"></div>
<div class="a" style="left:1127px;top:247px;width:1px;height:345px;background:#dedede"></div>
<div class="a" style="left:247px;top:247px;width:142px;height:32px;background:#3599bd"></div>
<div class="a" style="left:247px;top:279px;width:142px;height:1px;background:#c4c4c4"></div>
<div class="t" style="left:258.80px;top:259.57px;font-size:10.2px;color:#e6f4fa;transform:scaleX(0.8935);transform-origin:0 0;">RECEITA COM SERVIÇOS</div>
<div class="a" style="left:247px;top:280px;width:142px;height:33px;background:#fb5a57"></div>
<div class="a" style="left:247px;top:313px;width:142px;height:1px;background:#c4c4c4"></div>
<div class="t" style="left:258.80px;top:293.07px;font-size:10.2px;color:#ffe6e4;transform:scaleX(0.8935);transform-origin:0 0;">DESPESA COM RH</div>
<div class="a" style="left:247px;top:314px;width:142px;height:32px;background:#3599bd"></div>
<div class="a" style="left:247px;top:346px;width:142px;height:1px;background:#c4c4c4"></div>
<div class="t" style="left:258.80px;top:326.57px;font-size:10.2px;color:#e6f4fa;transform:scaleX(0.8935);transform-origin:0 0;">RECEITA COM SERVIÇOS</div>
<div class="a" style="left:247px;top:347px;width:142px;height:32px;background:#fb5a57"></div>
<div class="a" style="left:247px;top:379px;width:142px;height:1px;background:#c4c4c4"></div>
<div class="t" style="left:258.80px;top:359.57px;font-size:10.2px;color:#ffe6e4;transform:scaleX(0.8935);transform-origin:0 0;">OUTRO CUSTO</div>
<div class="a" style="left:247px;top:380px;width:142px;height:32px;background:#3599bd"></div>
<div class="a" style="left:247px;top:412px;width:142px;height:1px;background:#c4c4c4"></div>
<div class="t" style="left:258.80px;top:392.57px;font-size:10.2px;color:#e6f4fa;transform:scaleX(0.8935);transform-origin:0 0;">RECEITA COM SERVIÇOS</div>
<div class="a" style="left:247px;top:413px;width:142px;height:32px;background:#fb5a57"></div>
<div class="a" style="left:247px;top:445px;width:142px;height:1px;background:#c4c4c4"></div>
<div class="t" style="left:258.80px;top:425.57px;font-size:10.2px;color:#ffe6e4;transform:scaleX(0.8935);transform-origin:0 0;">DESPESAS OPERACIONAIS</div>
<div class="a" style="left:1px;top:0px;width:-1px;height:0px;"></div>
<div class="a" style="left:171px;top:181px;width:1px;height:411px;background:#9c9c9c"></div>
<div class="t" style="left:183.50px;top:210.08px;font-size:10px;color:#f2f2f2;font-weight:bold;transform:scaleX(0.9877);transform-origin:0 0;">Data do</div>
<div class="t" style="left:183.50px;top:226.08px;font-size:10px;color:#f2f2f2;font-weight:bold;transform:scaleX(0.9932);transform-origin:0 0;">Lançamento</div>
<div class="a" style="left:232px;top:231px;width:14px;height:14px;background:#f4f4f4;border:1px solid #d0d0d0"></div>
<svg class="a" style="left:236px;top:236px" width="7" height="5" viewBox="0 0 7 5"><path d="M.5 .8h6L3.5 4z" fill="#4a4a4a"/></svg>
<div class="t" style="left:258.50px;top:217.68px;font-size:10px;color:#f2f2f2;font-weight:bold;transform:scaleX(0.8819);transform-origin:0 0;">Classificação</div>
<div class="a" style="left:374.5px;top:231px;width:14.0px;height:14px;background:#f4f4f4;border:1px solid #d0d0d0"></div>
<svg class="a" style="left:378.5px;top:236px" width="7" height="5" viewBox="0 0 7 5"><path d="M.5 .8h6L3.5 4z" fill="#4a4a4a"/></svg>
<div class="t" style="left:401.00px;top:217.68px;font-size:10px;color:#f2f2f2;font-weight:bold;transform:scaleX(0.9668);transform-origin:0 0;">Plano de Contas</div>
<div class="a" style="left:516.5px;top:231px;width:14.0px;height:14px;background:#f4f4f4;border:1px solid #d0d0d0"></div>
<svg class="a" style="left:520.5px;top:236px" width="7" height="5" viewBox="0 0 7 5"><path d="M.5 .8h6L3.5 4z" fill="#4a4a4a"/></svg>
<div class="t" style="left:543.00px;top:217.68px;font-size:10px;color:#f2f2f2;font-weight:bold;transform:scaleX(1.0949);transform-origin:0 0;">Item</div>
<div class="a" style="left:637.5px;top:231px;width:14.0px;height:14px;background:#f4f4f4;border:1px solid #d0d0d0"></div>
<svg class="a" style="left:641.5px;top:236px" width="7" height="5" viewBox="0 0 7 5"><path d="M.5 .8h6L3.5 4z" fill="#4a4a4a"/></svg>
<div class="t" style="left:665.00px;top:210.08px;font-size:10px;color:#f2f2f2;font-weight:bold;">Forma de</div>
<div class="t" style="left:665.00px;top:225.68px;font-size:10px;color:#f2f2f2;font-weight:bold;transform:scaleX(0.9879);transform-origin:0 0;">Pagamento</div>
<div class="a" style="left:721.5px;top:231px;width:14.0px;height:14px;background:#f4f4f4;border:1px solid #d0d0d0"></div>
<svg class="a" style="left:725.5px;top:236px" width="7" height="5" viewBox="0 0 7 5"><path d="M.5 .8h6L3.5 4z" fill="#4a4a4a"/></svg>
<div class="t" style="left:748.75px;top:217.68px;font-size:10px;color:#f2f2f2;font-weight:bold;transform:scaleX(0.9002);transform-origin:0 0;">Banco</div>
<div class="a" style="left:823.5px;top:231px;width:14.0px;height:14px;background:#f4f4f4;border:1px solid #d0d0d0"></div>
<svg class="a" style="left:827.5px;top:236px" width="7" height="5" viewBox="0 0 7 5"><path d="M.5 .8h6L3.5 4z" fill="#4a4a4a"/></svg>
<div class="t" style="left:850.75px;top:217.68px;font-size:10px;color:#f2f2f2;font-weight:bold;">Centro de Custo</div>
<div class="a" style="left:927.5px;top:231px;width:14.0px;height:14px;background:#f4f4f4;border:1px solid #d0d0d0"></div>
<svg class="a" style="left:931.5px;top:236px" width="7" height="5" viewBox="0 0 7 5"><path d="M.5 .8h6L3.5 4z" fill="#4a4a4a"/></svg>
<div class="t" style="left:954.50px;top:217.68px;font-size:10px;color:#f2f2f2;font-weight:bold;">Cliente</div>
<div class="a" style="left:1030px;top:231px;width:14px;height:14px;background:#f4f4f4;border:1px solid #d0d0d0"></div>
<svg class="a" style="left:1034px;top:236px" width="7" height="5" viewBox="0 0 7 5"><path d="M.5 .8h6L3.5 4z" fill="#4a4a4a"/></svg>
<div class="t" style="left:1056.70px;top:217.68px;font-size:10px;color:#f2f2f2;font-weight:bold;transform:scaleX(1.0266);transform-origin:0 0;">Valor</div>
<div class="a" style="left:1112px;top:231px;width:14px;height:14px;background:#f4f4f4;border:1px solid #d0d0d0"></div>
<svg class="a" style="left:1116px;top:236px" width="7" height="5" viewBox="0 0 7 5"><path d="M.5 .8h6L3.5 4z" fill="#4a4a4a"/></svg>
<div class="t" style="left:1139.25px;top:209.88px;font-size:10px;color:#f2f2f2;font-weight:bold;transform:scaleX(0.9754);transform-origin:0 0;">Data do</div>
<div class="t" style="left:1139.25px;top:225.48px;font-size:10px;color:#f2f2f2;font-weight:bold;transform:scaleX(0.9879);transform-origin:0 0;">Pagamento</div>
<div class="t" style="left:180.20px;top:258.57px;font-size:11px;color:#262626;transform:scaleX(1.0785);transform-origin:0 0;">01/01/2019</div>
<div class="t" style="left:401.30px;top:258.57px;font-size:11px;color:#262626;transform:scaleX(1.0192);transform-origin:0 0;">Apostila Financeira</div>
<div class="t" style="left:543.90px;top:258.57px;font-size:11px;color:#262626;transform:scaleX(0.9880);transform-origin:0 0;">item teste</div>
<div class="t" style="left:673.72px;top:258.57px;font-size:11px;color:#262626;transform:scaleX(1.0192);transform-origin:0 0;">Dinheiro</div>
<div class="t" style="left:767.46px;top:258.57px;font-size:11px;color:#262626;transform:scaleX(0.9880);transform-origin:0 0;">Banco 1</div>
<div class="t" style="left:846.20px;top:258.57px;font-size:11px;color:#262626;transform:scaleX(0.9828);transform-origin:0 0;">Centro de custos 1</div>
<div class="t" style="left:961.17px;top:258.57px;font-size:11px;color:#262626;transform:scaleX(0.9880);transform-origin:0 0;">Fornecedor 1</div>
<div class="t" style="left:1057.01px;top:258.57px;font-size:11px;color:#262626;transform:scaleX(1.0088);transform-origin:0 0;">R$1.200,00</div>
<div class="t" style="left:1134.60px;top:258.57px;font-size:11px;color:#262626;transform:scaleX(1.0785);transform-origin:0 0;">01/01/2019</div>
<div class="t" style="left:180.20px;top:292.07px;font-size:11px;color:#262626;transform:scaleX(1.0785);transform-origin:0 0;">02/01/2019</div>
<div class="t" style="left:401.30px;top:292.07px;font-size:11px;color:#262626;transform:scaleX(1.0192);transform-origin:0 0;">Salários</div>
<div class="t" style="left:543.90px;top:292.07px;font-size:11px;color:#262626;transform:scaleX(0.9880);transform-origin:0 0;">item teste 2</div>
<div class="t" style="left:678.40px;top:292.07px;font-size:11px;color:#262626;transform:scaleX(1.0192);transform-origin:0 0;">Débito</div>
<div class="t" style="left:767.46px;top:292.07px;font-size:11px;color:#262626;transform:scaleX(0.9880);transform-origin:0 0;">Banco 2</div>
<div class="t" style="left:846.20px;top:292.07px;font-size:11px;color:#262626;transform:scaleX(0.9828);transform-origin:0 0;">Centro de custos 2</div>
<div class="t" style="left:972.06px;top:292.07px;font-size:11px;color:#262626;transform:scaleX(0.9880);transform-origin:0 0;">Cliente 5</div>
<div class="t" style="left:1057.01px;top:292.07px;font-size:11px;color:#262626;transform:scaleX(1.0088);transform-origin:0 0;">R$2.500,00</div>
<div class="t" style="left:180.20px;top:325.57px;font-size:11px;color:#262626;transform:scaleX(1.0785);transform-origin:0 0;">03/01/2019</div>
<div class="t" style="left:401.30px;top:325.57px;font-size:11px;color:#262626;transform:scaleX(1.0192);transform-origin:0 0;">Consultoria Estratégica</div>
<div class="t" style="left:543.90px;top:325.57px;font-size:11px;color:#262626;transform:scaleX(0.9880);transform-origin:0 0;">teste 3</div>
<div class="t" style="left:674.95px;top:325.57px;font-size:11px;color:#262626;transform:scaleX(1.0192);transform-origin:0 0;">Cheque</div>
<div class="t" style="left:767.46px;top:325.57px;font-size:11px;color:#262626;transform:scaleX(0.9880);transform-origin:0 0;">Banco 3</div>
<div class="t" style="left:846.20px;top:325.57px;font-size:11px;color:#262626;transform:scaleX(0.9828);transform-origin:0 0;">Centro de custos 3</div>
<div class="t" style="left:972.06px;top:325.57px;font-size:11px;color:#262626;transform:scaleX(0.9880);transform-origin:0 0;">Cliente 5</div>
<div class="t" style="left:1057.01px;top:325.57px;font-size:11px;color:#262626;transform:scaleX(1.0088);transform-origin:0 0;">R$3.000,00</div>
<div class="t" style="left:1134.60px;top:325.57px;font-size:11px;color:#262626;transform:scaleX(1.0785);transform-origin:0 0;">03/01/2019</div>
<div class="t" style="left:180.20px;top:358.57px;font-size:11px;color:#262626;transform:scaleX(1.0785);transform-origin:0 0;">04/01/2019</div>
<div class="t" style="left:401.30px;top:358.57px;font-size:11px;color:#262626;transform:scaleX(1.0192);transform-origin:0 0;">Professores</div>
<div class="t" style="left:543.90px;top:358.57px;font-size:11px;color:#262626;transform:scaleX(0.9880);transform-origin:0 0;">teste 4</div>
<div class="t" style="left:673.72px;top:358.57px;font-size:11px;color:#262626;transform:scaleX(1.0192);transform-origin:0 0;">Dinheiro</div>
<div class="t" style="left:767.46px;top:358.57px;font-size:11px;color:#262626;transform:scaleX(0.9880);transform-origin:0 0;">Banco 1</div>
<div class="t" style="left:846.20px;top:358.57px;font-size:11px;color:#262626;transform:scaleX(0.9828);transform-origin:0 0;">Centro de custos 3</div>
<div class="t" style="left:961.17px;top:358.57px;font-size:11px;color:#262626;transform:scaleX(0.9880);transform-origin:0 0;">Fornecedor 1</div>
<div class="t" style="left:1053.94px;top:358.57px;font-size:11px;color:#262626;transform:scaleX(1.0088);transform-origin:0 0;">R$10.000,00</div>
<div class="t" style="left:1134.60px;top:358.57px;font-size:11px;color:#262626;transform:scaleX(1.0785);transform-origin:0 0;">04/01/2019</div>
<div class="t" style="left:180.20px;top:391.57px;font-size:11px;color:#262626;transform:scaleX(1.0785);transform-origin:0 0;">05/01/2019</div>
<div class="t" style="left:401.30px;top:391.57px;font-size:11px;color:#262626;transform:scaleX(1.0192);transform-origin:0 0;">Consultoria Estratégica</div>
<div class="t" style="left:543.90px;top:391.57px;font-size:11px;color:#262626;transform:scaleX(0.9880);transform-origin:0 0;">teste5</div>
<div class="t" style="left:678.40px;top:391.57px;font-size:11px;color:#262626;transform:scaleX(1.0192);transform-origin:0 0;">Débito</div>
<div class="t" style="left:766.23px;top:391.57px;font-size:11px;color:#262626;transform:scaleX(0.9880);transform-origin:0 0;">Caixinha</div>
<div class="t" style="left:846.20px;top:391.57px;font-size:11px;color:#262626;transform:scaleX(0.9828);transform-origin:0 0;">Centro de custos 5</div>
<div class="t" style="left:972.06px;top:391.57px;font-size:11px;color:#262626;transform:scaleX(0.9880);transform-origin:0 0;">Cliente 2</div>
<div class="t" style="left:1057.01px;top:391.57px;font-size:11px;color:#262626;transform:scaleX(1.0088);transform-origin:0 0;">R$5.600,00</div>
<div class="t" style="left:1134.60px;top:391.57px;font-size:11px;color:#262626;transform:scaleX(1.0785);transform-origin:0 0;">05/01/2019</div>
<div class="t" style="left:180.20px;top:424.57px;font-size:11px;color:#262626;transform:scaleX(1.0785);transform-origin:0 0;">06/01/2019</div>
<div class="t" style="left:401.30px;top:424.57px;font-size:11px;color:#262626;transform:scaleX(1.0192);transform-origin:0 0;">Aluguel</div>
<div class="t" style="left:543.90px;top:424.57px;font-size:11px;color:#262626;transform:scaleX(0.9880);transform-origin:0 0;">aluguel 1</div>
<div class="t" style="left:673.72px;top:424.57px;font-size:11px;color:#262626;transform:scaleX(1.0192);transform-origin:0 0;">Dinheiro</div>
<div class="t" style="left:767.46px;top:424.57px;font-size:11px;color:#262626;transform:scaleX(0.9880);transform-origin:0 0;">Banco 2</div>
<div class="t" style="left:846.20px;top:424.57px;font-size:11px;color:#262626;transform:scaleX(0.9828);transform-origin:0 0;">Centro de custos 3</div>
<div class="t" style="left:961.17px;top:424.57px;font-size:11px;color:#262626;transform:scaleX(0.9880);transform-origin:0 0;">Fornecedor 1</div>
<div class="t" style="left:1057.01px;top:424.57px;font-size:11px;color:#262626;transform:scaleX(1.0088);transform-origin:0 0;">R$3.000,00</div>
<div class="t" style="left:1134.60px;top:424.57px;font-size:11px;color:#262626;transform:scaleX(1.0785);transform-origin:0 0;">06/01/2019</div>
</div>
<div class="a" style="left:1180px;top:181px;width:20px;height:411px;background:#f3f3f3"></div>
<div class="a" style="left:1180px;top:181px;width:1px;height:411px;background:#a8a8a8"></div>
<div class="a" style="left:1184px;top:182px;width:13px;height:14px;background:#fff;border:1px solid #c6c6c6"></div>
<svg class="a" style="left:1187px;top:186px" width="8" height="6" viewBox="0 0 8 6"><path d="M.5 5h7L4 .8z" fill="#222"/></svg>
<div class="a" style="left:1184px;top:195px;width:13px;height:16px;background:#fff;border:1px solid #c6c6c6"></div>
<div class="a" style="left:1184px;top:578px;width:13px;height:14px;background:#fff;border:1px solid #c6c6c6"></div>
<svg class="a" style="left:1187px;top:582px" width="8" height="6" viewBox="0 0 8 6"><path d="M.5 1h7L4 5.2z" fill="#222"/></svg>
<svg class="a" width="0" height="0" style="left:0;top:0"><defs><filter id="sh" x="-50%" y="-50%" width="200%" height="200%"><feDropShadow dx="1.2" dy="1.5" stdDeviation="1" flood-color="#000" flood-opacity=".35"/></filter></defs></svg>
<div class="a" style="left:20px;top:186px;width:142px;height:60px;background:#3599bb"></div>
<svg class="a" style="left:27px;top:195px" width="48" height="40" viewBox="0 0 48 40"><rect x="4" y="1.5" width="30" height="35" rx="3.5" fill="none" stroke="#0c0f14" stroke-width="2.6"/><path d="M.5 9h6M.5 14h6M.5 18.5h6M.5 23h6M.5 28h6" stroke="#0c0f14" stroke-width="2.3"/><path d="M10.5 8.5l1.5 1.8 3-3.8M10.5 15.5l1.5 1.8 3-3.8M10.5 22.5l1.5 1.8 3-3.8" fill="none" stroke="#0c0f14" stroke-width="1.5"/><path d="M16 11h12M16 18h12M16 24h4" stroke="#0c0f14" stroke-width="2"/><path d="M19 33.5l3-7 21-14.5 3.5 5-21 14.5z" fill="#0c0f14"/><path d="M22 27l3.5 4.5-6 2.3z" fill="#3599bb" stroke="#0c0f14" stroke-width="1.2"/></svg>
<div class="t" style="left:75.50px;top:215.78px;font-size:10px;color:#eef8fc;font-weight:bold;transform:scaleX(0.9575);transform-origin:0 0;">LANÇAMENTOS</div>
<div class="a" style="left:17px;top:247px;width:147px;height:267px;background:#fff;box-shadow:3px 3px 3px rgba(0,0,0,.28)"></div>
<div class="a" style="left:24.4px;top:255.3px;width:64.4px;height:30.19999999999999px;background:#3898bb;border:1.3px solid #2f6f84;border-radius:5px;box-shadow:2px 3px 3px rgba(0,0,0,.28)"></div>
<svg class="a" style="left:33px;top:265px" width="11" height="11" viewBox="0 0 11 11"><path d="M1.3 1.2l6.6 4.1-6.6 4.1" fill="none" stroke="#161a22" stroke-width="2" stroke-linejoin="miter" filter="url(#sh)"/></svg>
<div class="t" style="left:53.50px;top:266.42px;font-size:10.3px;color:#e8f6fb;font-weight:bold;transform:scaleX(0.9223);transform-origin:0 0;">JAN</div>
<div class="a" style="left:95px;top:255.3px;width:61.80000000000001px;height:30.19999999999999px;background:linear-gradient(160deg,#ffffff 30%,#eef6f6);border:1.3px solid #4f8f91;border-radius:5px;box-shadow:1px 2px 3px rgba(0,0,0,.18)"></div>
<svg class="a" style="left:105px;top:265px" width="11" height="11" viewBox="0 0 11 11"><path d="M1.3 1.2l6.6 4.1-6.6 4.1" fill="none" stroke="#161a22" stroke-width="2" stroke-linejoin="miter" filter="url(#sh)"/></svg>
<div class="t" style="left:123.50px;top:267.12px;font-size:10.3px;color:#1a1a1a;font-weight:bold;transform:scaleX(0.8733);transform-origin:0 0;">JUL</div>
<div class="a" style="left:24.4px;top:296.3px;width:64.4px;height:30.19999999999999px;background:linear-gradient(160deg,#ffffff 30%,#eef6f6);border:1.3px solid #4f8f91;border-radius:5px;box-shadow:1px 2px 3px rgba(0,0,0,.18)"></div>
<svg class="a" style="left:34px;top:306px" width="11" height="11" viewBox="0 0 11 11"><path d="M1.3 1.2l6.6 4.1-6.6 4.1" fill="none" stroke="#161a22" stroke-width="2" stroke-linejoin="miter" filter="url(#sh)"/></svg>
<div class="t" style="left:49.90px;top:308.12px;font-size:10.3px;color:#1a1a1a;font-weight:bold;transform:scaleX(0.8935);transform-origin:0 0;">FEV</div>
<div class="a" style="left:95px;top:296.3px;width:61.80000000000001px;height:30.19999999999999px;background:linear-gradient(160deg,#ffffff 30%,#eef6f6);border:1.3px solid #4f8f91;border-radius:5px;box-shadow:1px 2px 3px rgba(0,0,0,.18)"></div>
<svg class="a" style="left:105px;top:306px" width="11" height="11" viewBox="0 0 11 11"><path d="M1.3 1.2l6.6 4.1-6.6 4.1" fill="none" stroke="#161a22" stroke-width="2" stroke-linejoin="miter" filter="url(#sh)"/></svg>
<div class="t" style="left:122.80px;top:308.02px;font-size:10.3px;color:#1a1a1a;font-weight:bold;transform:scaleX(0.9581);transform-origin:0 0;">AGO</div>
<div class="a" style="left:23.6px;top:339.5px;width:64.1px;height:29.5px;background:linear-gradient(160deg,#ffffff 30%,#eef6f6);border:1.3px solid #4f8f91;border-radius:5px;box-shadow:1px 2px 3px rgba(0,0,0,.18)"></div>
<svg class="a" style="left:33px;top:349px" width="11" height="11" viewBox="0 0 11 11"><path d="M1.3 1.2l6.6 4.1-6.6 4.1" fill="none" stroke="#161a22" stroke-width="2" stroke-linejoin="miter" filter="url(#sh)"/></svg>
<div class="t" style="left:49.50px;top:349.42px;font-size:10.3px;color:#1a1a1a;font-weight:bold;transform:scaleX(1.0114);transform-origin:0 0;">MAR</div>
<div class="a" style="left:94.4px;top:339.5px;width:61.29999999999998px;height:29.5px;background:linear-gradient(160deg,#ffffff 30%,#eef6f6);border:1.3px solid #4f8f91;border-radius:5px;box-shadow:1px 2px 3px rgba(0,0,0,.18)"></div>
<svg class="a" style="left:103px;top:349px" width="11" height="11" viewBox="0 0 11 11"><path d="M1.3 1.2l6.6 4.1-6.6 4.1" fill="none" stroke="#161a22" stroke-width="2" stroke-linejoin="miter" filter="url(#sh)"/></svg>
<div class="t" style="left:121.00px;top:350.12px;font-size:10.3px;color:#1a1a1a;font-weight:bold;transform:scaleX(0.8685);transform-origin:0 0;">SET</div>
<div class="a" style="left:24.3px;top:381.2px;width:64.10000000000001px;height:29.80000000000001px;background:linear-gradient(160deg,#ffffff 30%,#eef6f6);border:1.3px solid #4f8f91;border-radius:5px;box-shadow:1px 2px 3px rgba(0,0,0,.18)"></div>
<svg class="a" style="left:33px;top:391px" width="11" height="11" viewBox="0 0 11 11"><path d="M1.3 1.2l6.6 4.1-6.6 4.1" fill="none" stroke="#161a22" stroke-width="2" stroke-linejoin="miter" filter="url(#sh)"/></svg>
<div class="t" style="left:51.50px;top:392.12px;font-size:10.3px;color:#1a1a1a;font-weight:bold;transform:scaleX(0.9417);transform-origin:0 0;">ABR</div>
<div class="a" style="left:95.1px;top:381.2px;width:61.70000000000002px;height:29.80000000000001px;background:linear-gradient(160deg,#ffffff 30%,#eef6f6);border:1.3px solid #4f8f91;border-radius:5px;box-shadow:1px 2px 3px rgba(0,0,0,.18)"></div>
<svg class="a" style="left:105px;top:391px" width="11" height="11" viewBox="0 0 11 11"><path d="M1.3 1.2l6.6 4.1-6.6 4.1" fill="none" stroke="#161a22" stroke-width="2" stroke-linejoin="miter" filter="url(#sh)"/></svg>
<div class="t" style="left:119.10px;top:392.12px;font-size:10.3px;color:#1a1a1a;font-weight:bold;transform:scaleX(0.9847);transform-origin:0 0;">OUT</div>
<div class="a" style="left:24.5px;top:423.2px;width:64.3px;height:29.100000000000023px;background:linear-gradient(160deg,#ffffff 30%,#eef6f6);border:1.3px solid #4f8f91;border-radius:5px;box-shadow:1px 2px 3px rgba(0,0,0,.18)"></div>
<svg class="a" style="left:33px;top:433px" width="11" height="11" viewBox="0 0 11 11"><path d="M1.3 1.2l6.6 4.1-6.6 4.1" fill="none" stroke="#161a22" stroke-width="2" stroke-linejoin="miter" filter="url(#sh)"/></svg>
<div class="t" style="left:52.70px;top:434.12px;font-size:10.3px;color:#1a1a1a;font-weight:bold;transform:scaleX(1.1164);transform-origin:0 0;">MAI</div>
<div class="a" style="left:95.2px;top:423.2px;width:61.8px;height:29.100000000000023px;background:linear-gradient(160deg,#ffffff 30%,#eef6f6);border:1.3px solid #4f8f91;border-radius:5px;box-shadow:1px 2px 3px rgba(0,0,0,.18)"></div>
<svg class="a" style="left:105px;top:433px" width="11" height="11" viewBox="0 0 11 11"><path d="M1.3 1.2l6.6 4.1-6.6 4.1" fill="none" stroke="#161a22" stroke-width="2" stroke-linejoin="miter" filter="url(#sh)"/></svg>
<div class="t" style="left:122.20px;top:435.92px;font-size:10.3px;color:#1a1a1a;font-weight:bold;transform:scaleX(1.0135);transform-origin:0 0;">NOV</div>
<div class="a" style="left:25.4px;top:464.4px;width:64.19999999999999px;height:29.400000000000034px;background:linear-gradient(160deg,#ffffff 30%,#eef6f6);border:1.3px solid #4f8f91;border-radius:5px;box-shadow:1px 2px 3px rgba(0,0,0,.18)"></div>
<svg class="a" style="left:34px;top:474px" width="11" height="11" viewBox="0 0 11 11"><path d="M1.3 1.2l6.6 4.1-6.6 4.1" fill="none" stroke="#161a22" stroke-width="2" stroke-linejoin="miter" filter="url(#sh)"/></svg>
<div class="t" style="left:49.40px;top:476.12px;font-size:10.3px;color:#1a1a1a;font-weight:bold;transform:scaleX(0.9612);transform-origin:0 0;">JUN</div>
<div class="a" style="left:96.2px;top:464.4px;width:61.60000000000001px;height:29.400000000000034px;background:linear-gradient(160deg,#ffffff 30%,#eef6f6);border:1.3px solid #4f8f91;border-radius:5px;box-shadow:1px 2px 3px rgba(0,0,0,.18)"></div>
<svg class="a" style="left:105px;top:474px" width="11" height="11" viewBox="0 0 11 11"><path d="M1.3 1.2l6.6 4.1-6.6 4.1" fill="none" stroke="#161a22" stroke-width="2" stroke-linejoin="miter" filter="url(#sh)"/></svg>
<div class="t" style="left:122.70px;top:476.92px;font-size:10.3px;color:#1a1a1a;font-weight:bold;transform:scaleX(0.9126);transform-origin:0 0;">DEZ</div>
<svg class="a" style="left:50px;top:524px" width="47" height="47" viewBox="0 0 47 47"><circle cx="23.5" cy="23.5" r="22.5" fill="#ea5656"/><path d="M23.6 10.2L9.8 26.5h4.8v10.7h6V31h6v6.2h6V26.5h4.8z" fill="#fff" stroke="#fff" stroke-width="1.2" stroke-linejoin="round"/></svg>
<div class="t" style="left:42.00px;top:579.77px;font-size:10px;color:#7a7a7a;font-weight:bold;transform:scaleX(0.9949);transform-origin:0 0;">MENU INICIAL</div>
<div class="a" style="left:7px;top:592px;width:1193px;height:25px;background:#e9e9e9"></div>
<div class="a" style="left:7px;top:592px;width:1193px;height:1px;background:#c8c8c8"></div>
<svg class="a" style="left:29px;top:599px" width="6" height="9" viewBox="0 0 6 9"><path d="M5 .5v8L.8 4.5z" fill="#bdbdbd"/></svg>
<svg class="a" style="left:55px;top:599px" width="6" height="9" viewBox="0 0 6 9"><path d="M1 .5v8l4.2-4z" fill="#1f6e43"/></svg>
<div class="a" style="left:95px;top:598px;width:1px;height:14px;background:#b8b8b8"></div>
<div class="a" style="left:148px;top:598px;width:1px;height:14px;background:#b8b8b8"></div>
<div class="a" style="left:206px;top:598px;width:1px;height:14px;background:#b8b8b8"></div>
<div class="a" style="left:265px;top:598px;width:1px;height:14px;background:#b8b8b8"></div>
<div class="a" style="left:319px;top:598px;width:1px;height:14px;background:#b8b8b8"></div>
<div class="a" style="left:390px;top:598px;width:1px;height:14px;background:#b8b8b8"></div>
<div class="a" style="left:444px;top:598px;width:1px;height:14px;background:#b8b8b8"></div>
<div class="a" style="left:596px;top:598px;width:1px;height:14px;background:#b8b8b8"></div>
<div class="a" style="left:638px;top:598px;width:1px;height:14px;background:#b8b8b8"></div>
<div class="a" style="left:678px;top:598px;width:1px;height:14px;background:#b8b8b8"></div>
<div class="a" style="left:719px;top:598px;width:1px;height:14px;background:#b8b8b8"></div>
<div class="a" style="left:759px;top:598px;width:1px;height:14px;background:#b8b8b8"></div>
<div class="a" style="left:796px;top:598px;width:1px;height:14px;background:#b8b8b8"></div>
<div class="a" style="left:838px;top:598px;width:1px;height:14px;background:#b8b8b8"></div>
<div class="a" style="left:876px;top:598px;width:1px;height:14px;background:#b8b8b8"></div>
<div class="a" style="left:517px;top:592px;width:40px;height:24px;background:#fff"></div>
<div class="a" style="left:518px;top:612px;width:38px;height:2px;background:#1f7145"></div>
<div class="t" style="left:105.00px;top:598.82px;font-size:11.5px;color:#444;transform:scaleX(0.9596);transform-origin:0 0;">MENU</div>
<div class="t" style="left:159.50px;top:598.82px;font-size:11.5px;color:#444;transform:scaleX(0.8287);transform-origin:0 0;">PC_Rec</div>
<div class="t" style="left:217.50px;top:598.82px;font-size:11.5px;color:#444;transform:scaleX(0.8462);transform-origin:0 0;">PC_Des</div>
<div class="t" style="left:275.80px;top:598.82px;font-size:11.5px;color:#444;transform:scaleX(0.8080);transform-origin:0 0;">PC_CC</div>
<div class="t" style="left:330.30px;top:598.82px;font-size:11.5px;color:#444;transform:scaleX(0.8659);transform-origin:0 0;">PC_Banco</div>
<div class="t" style="left:401.80px;top:598.82px;font-size:11.5px;color:#444;transform:scaleX(0.8220);transform-origin:0 0;">PC_Cli</div>
<div class="t" style="left:456.00px;top:598.82px;font-size:11.5px;color:#444;transform:scaleX(0.8925);transform-origin:0 0;">PC_Transf</div>
<div class="t" style="left:527.00px;top:598.52px;font-size:11.5px;color:#1f6e43;font-weight:bold;transform:scaleX(0.9326);transform-origin:0 0;">Jan</div>
<div class="t" style="left:567.40px;top:598.82px;font-size:11.5px;color:#444;transform:scaleX(0.8826);transform-origin:0 0;">Fev</div>
<div class="t" style="left:606.00px;top:598.82px;font-size:11.5px;color:#444;transform:scaleX(1.0617);transform-origin:0 0;">Mar</div>
<div class="t" style="left:648.00px;top:598.82px;font-size:11.5px;color:#444;transform:scaleX(1.0345);transform-origin:0 0;">Abr</div>
<div class="t" style="left:688.70px;top:598.82px;font-size:11.5px;color:#444;transform:scaleX(1.0316);transform-origin:0 0;">Mai</div>
<div class="t" style="left:730.30px;top:598.82px;font-size:11.5px;color:#444;transform:scaleX(0.8804);transform-origin:0 0;">Jun</div>
<div class="t" style="left:770.40px;top:598.82px;font-size:11.5px;color:#444;transform:scaleX(0.8967);transform-origin:0 0;">Jul</div>
<div class="t" style="left:805.80px;top:598.82px;font-size:11.5px;color:#444;transform:scaleX(1.0259);transform-origin:0 0;">Ago</div>
<div class="t" style="left:849.00px;top:598.82px;font-size:11.5px;color:#444;transform:scaleX(0.8928);transform-origin:0 0;">Set</div>
<div class="t" style="left:885.40px;top:600.27px;font-size:11px;color:#1f6e43;font-weight:bold;transform:scaleX(1.0778);transform-origin:0 0;">...</div>
<svg class="a" style="left:907px;top:597px" width="15" height="15" viewBox="0 0 15 15"><circle cx="7.5" cy="7.5" r="6.3" fill="none" stroke="#c4c4c4" stroke-width="1.1"/><path d="M7.5 4v7M4 7.5h7" stroke="#c4c4c4" stroke-width="1.1"/></svg>
<div class="a" style="left:939px;top:599px;width:2px;height:2px;background:#aaa"></div>
<div class="a" style="left:939px;top:603px;width:2px;height:2px;background:#aaa"></div>
<div class="a" style="left:939px;top:607px;width:2px;height:2px;background:#aaa"></div>
<div class="a" style="left:954px;top:598px;width:226px;height:13px;background:#f3f3f3"></div>
<div class="a" style="left:954px;top:598px;width:13px;height:13px;background:#fff;border:1px solid #c6c6c6"></div>
<svg class="a" style="left:957px;top:601px" width="6" height="8" viewBox="0 0 6 8"><path d="M5 .5v7L1 4z" fill="#222"/></svg>
<div class="a" style="left:966px;top:598px;width:78px;height:13px;background:#fff;border:1px solid #c6c6c6"></div>
<div class="a" style="left:1167px;top:598px;width:13px;height:13px;background:#fff;border:1px solid #c6c6c6"></div>
<svg class="a" style="left:1171px;top:601px" width="6" height="8" viewBox="0 0 6 8"><path d="M1 .5v7L5 4z" fill="#222"/></svg>
<div class="a" style="left:7px;top:617px;width:1193px;height:19px;background:#f3f3f3"></div>
<div class="t" style="left:13.75px;top:622.22px;font-size:10.5px;color:#444;transform:scaleX(0.9459);transform-origin:0 0;">Pronto</div>
<svg class="a" style="left:60px;top:619px" width="15" height="14" viewBox="0 0 15 14"><rect x="1" y="1.5" width="11" height="10" fill="none" stroke="#555" stroke-width="1"/><path d="M1 4h11" stroke="#555"/><circle cx="9.5" cy="9" r="3" fill="#f3f3f3" stroke="#555" stroke-width="1.1"/><circle cx="9.5" cy="9" r="1" fill="#555"/></svg>
<svg class="a" style="left:87px;top:618px" width="16" height="16" viewBox="0 0 16 16"><circle cx="7" cy="3" r="1.6" fill="none" stroke="#555" stroke-width="1"/><path d="M2 6l5 1 5-1M7 7v3l-3 5M7 10l3 5" fill="none" stroke="#555" stroke-width="1"/><path d="M9 10l5 5M14 10l-5 5" stroke="#555" stroke-width="1"/></svg>
<div class="t" style="left:105.00px;top:622.22px;font-size:10.5px;color:#444;transform:scaleX(0.9541);transform-origin:0 0;">Acessibilidade: investigar</div>
<div class="a" style="left:944px;top:617px;width:34px;height:19px;background:#d4d4d4"></div>
<svg class="a" style="left:954px;top:620px" width="12" height="12" viewBox="0 0 12 12"><rect x=".5" y=".5" width="11" height="11" fill="none" stroke="#444"/><path d="M4 .5v11M8 .5v11M.5 4h11M.5 8h11" stroke="#444"/></svg>
<svg class="a" style="left:989px;top:620px" width="13" height="12" viewBox="0 0 13 12"><rect x=".5" y=".5" width="12" height="11" fill="none" stroke="#444"/><rect x="3" y="3" width="7" height="6" fill="none" stroke="#444"/><path d="M4.5 5h4M4.5 7h4" stroke="#444" stroke-width=".8"/></svg>
<svg class="a" style="left:1024px;top:619px" width="13" height="13" viewBox="0 0 13 13"><path d="M.5 .5h12v12H.5z" fill="none" stroke="#444"/><path d="M4 .5v5H.5M9 .5v5" fill="none" stroke="#444"/></svg>
<div class="a" style="left:1053px;top:626px;width:7px;height:1px;background:#555"></div>
<div class="a" style="left:1065px;top:626px;width:86px;height:1px;background:#555"></div>
<div class="a" style="left:1102px;top:621px;width:5px;height:10px;background:#333"></div>
<div class="a" style="left:1108px;top:623px;width:1px;height:6px;background:#555"></div>
<div class="a" style="left:1156px;top:626px;width:8px;height:1px;background:#555"></div>
<div class="a" style="left:1159.5px;top:622.5px;width:1.0px;height:8.0px;background:#555"></div>
<div class="t" style="left:1175.00px;top:621.82px;font-size:10.5px;color:#444;transform:scaleX(0.8333);transform-origin:0 0;">90%</div>
<div class="a" style="left:0px;top:636px;width:1200px;height:6px;background:linear-gradient(90deg,#26294a 0%,#2f2750 30%,#3b2552 55%,#3d2249 100%)"></div>
<div class="a" style="left:307px;top:636px;width:38px;height:6px;background:#4b4668"></div>
<div class="t" style="left:1157.00px;top:639.27px;font-size:10px;color:#f4f4f4;transform:scaleX(1.2774);transform-origin:0 0;">10:23</div>
</body></html>
